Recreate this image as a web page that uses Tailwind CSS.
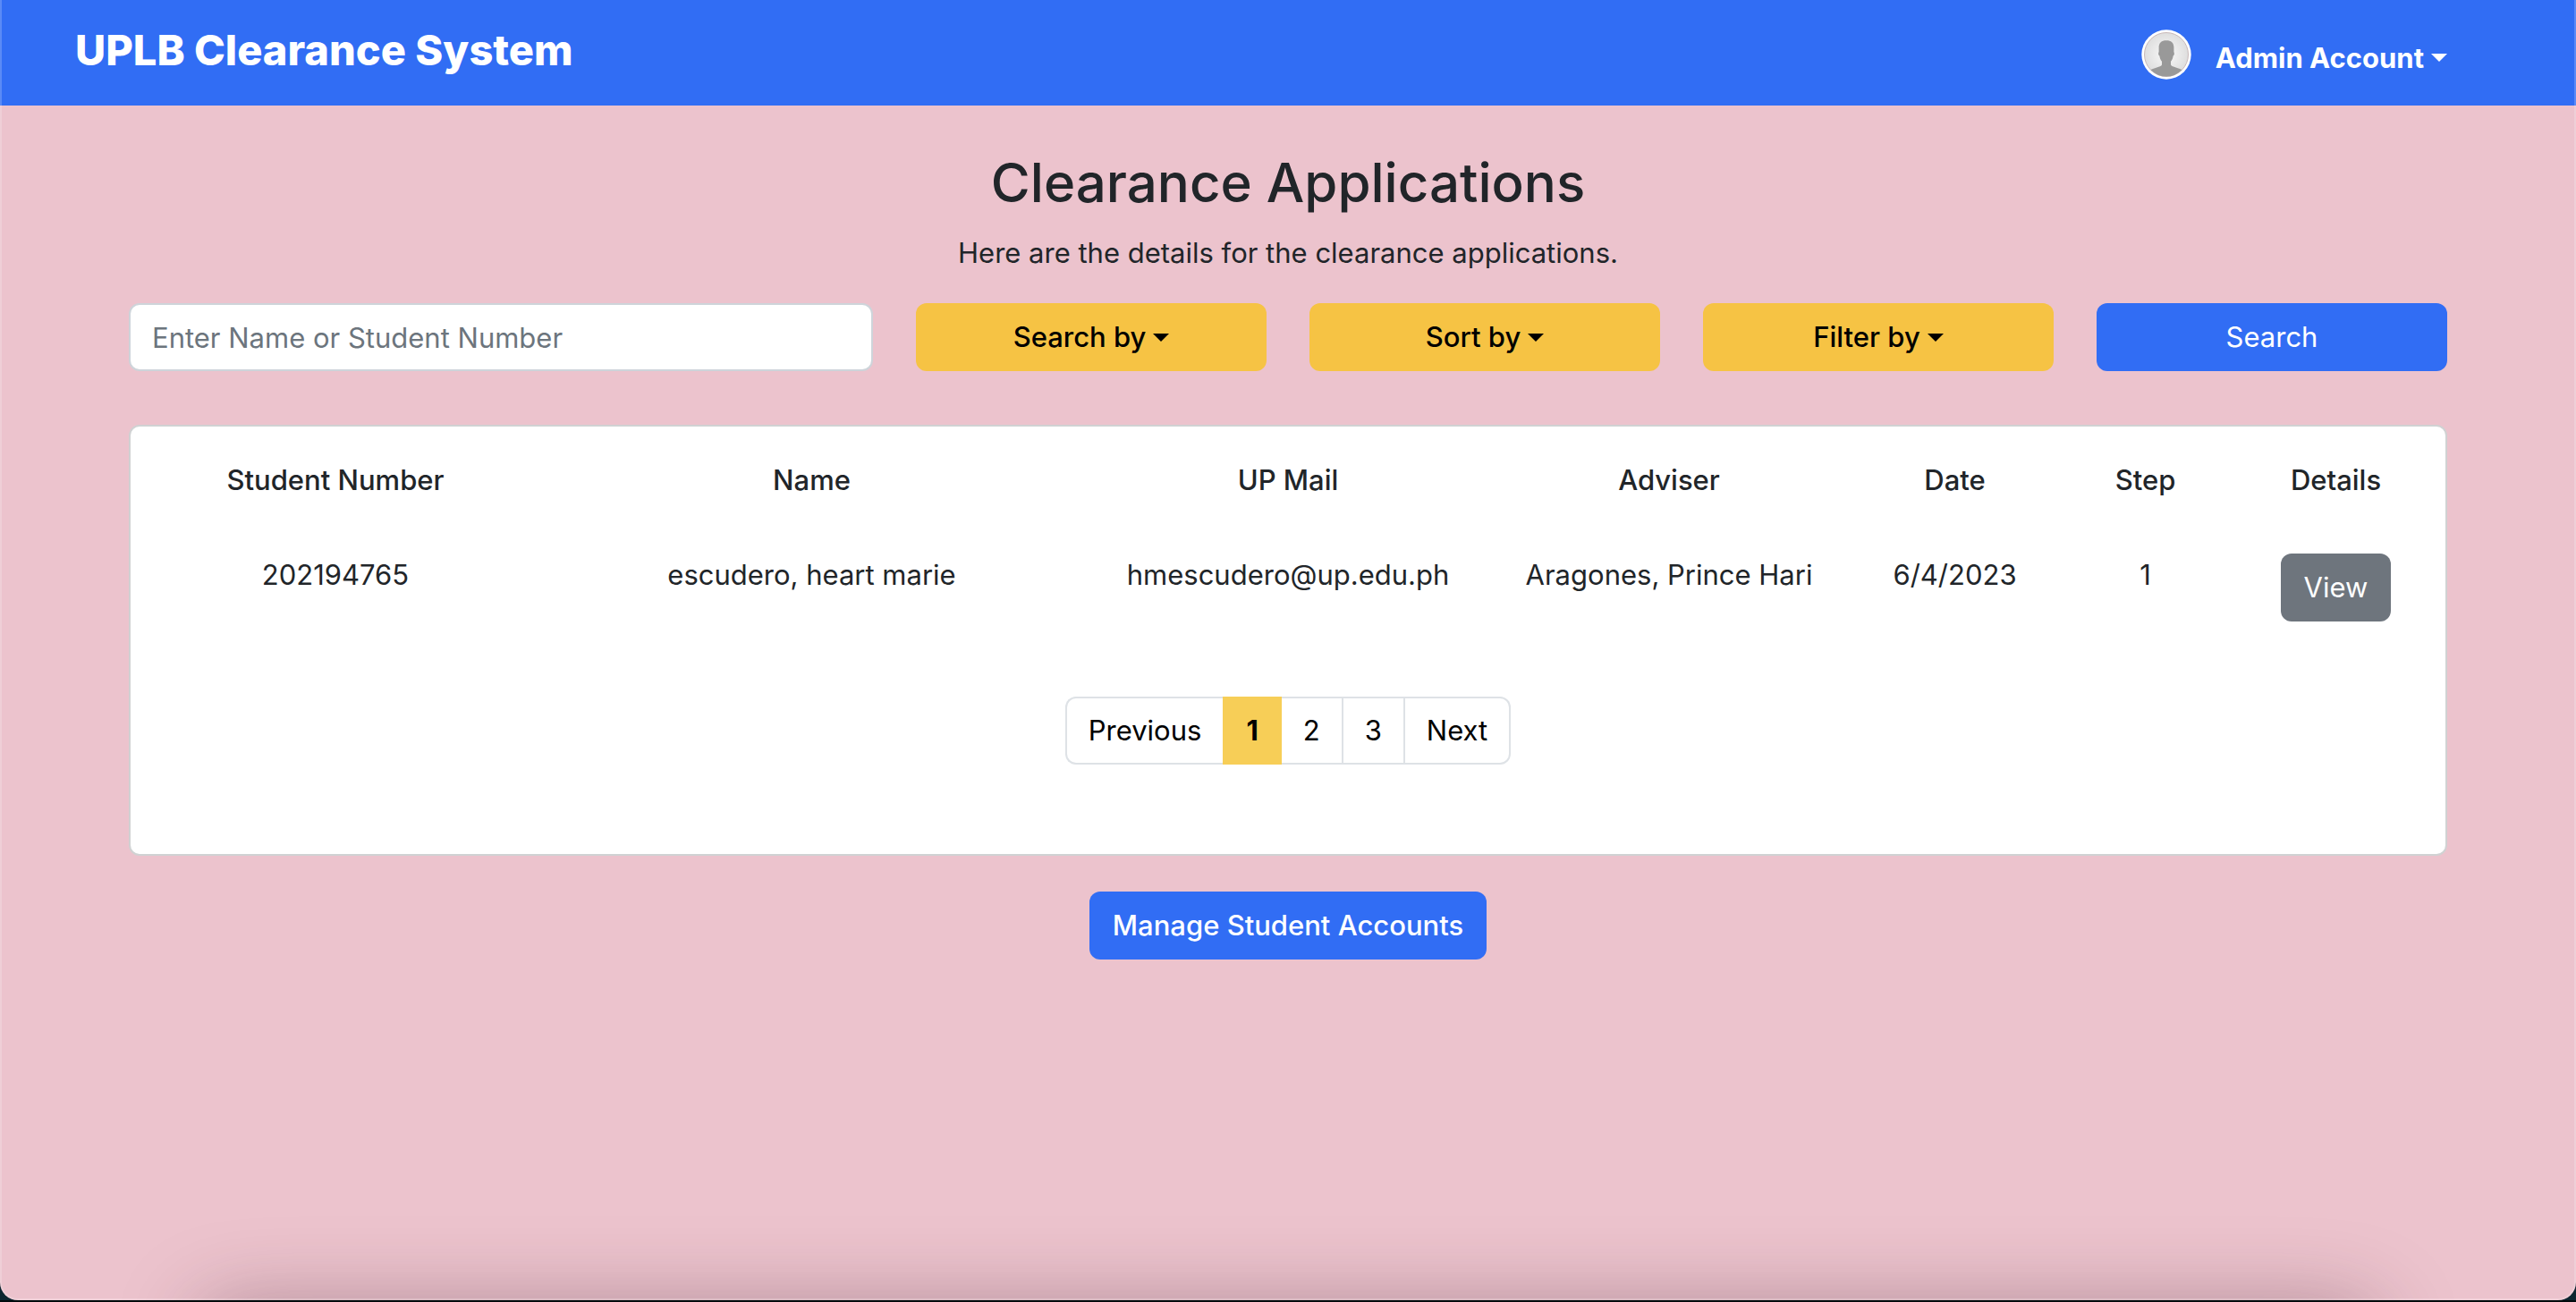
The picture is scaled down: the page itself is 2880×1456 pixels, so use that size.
<!DOCTYPE html>
<html lang="en" class="bg-black">
<head>
<meta charset="utf-8">
<title>UPLB Clearance System</title>
<script src="https://cdn.jsdelivr.net/npm/@tailwindcss/browser@4"></script>
</head>
<body class="bg-[#0d2630] border-b-2 border-[#020a0c] font-['Inter','Liberation_Sans',sans-serif] text-[31px] leading-12 text-[#212529]">
<div class="relative min-h-[calc(100vh-2px)] overflow-hidden rounded-b-[20px] bg-[#ecc3cd]">

  <header class="flex items-end justify-between bg-[#316df4] pt-[23px] pr-36 pb-[29px] pl-[84px] text-white">
    <a href="#" class="text-[47px] leading-[66px] font-extrabold">UPLB Clearance System</a>
    <button type="button" aria-haspopup="menu" class="flex items-end font-bold">
      <svg class="mr-[27px] size-14" viewBox="0 0 56 56" aria-hidden="true">
        <defs>
          <radialGradient id="halo"><stop offset="0" stop-color="#fafafa"/><stop offset="1" stop-color="#dedede"/></radialGradient>
          <clipPath id="disc"><circle cx="28" cy="28" r="24.5"/></clipPath>
        </defs>
        <circle cx="28" cy="28" r="27.7" fill="#fff"/>
        <circle cx="28" cy="28" r="24.5" fill="url(#halo)" stroke="#c9b9b9" stroke-width="1"/>
        <path clip-path="url(#disc)" fill="#999" d="M28 12.200c-5.400 0-8.400 2.600-8.400 7.800v5.300c-.8.200-.6 3.600.7 4 .4 3 1.300 5 2.700 6.500v3.700c-1.300 2.600-9 3.200-14.500 6.500V56h39V46c-5.500-3.300-13.200-3.900-14.500-6.500v-3.700c1.400-1.500 2.300-3.500 2.700-6.500 1.300-.4 1.500-3.800.7-4V20c0-5.200-3-7.800-8.400-7.800z"/>
      </svg>
      <span>Admin Account</span>
      <svg class="mb-5 ml-2 h-[9px] w-[18px] fill-current" viewBox="0 0 18 9" aria-hidden="true"><path d="M0 0h18L9 9z"/></svg>
    </button>
  </header>

  <main class="px-36 pt-12 text-center">
    <h1 class="text-[60px] leading-[77px] font-medium">Clearance Applications</h1>
    <p class="mt-4">Here are the details for the clearance applications.</p>

    <form class="mt-8 grid grid-cols-6 gap-12" onsubmit="return false">
      <input type="search" aria-label="Name or student number" placeholder="Enter Name or Student Number" class="col-span-2 h-[76px] rounded-xl border-2 border-[#ced4da] bg-white px-6 placeholder:text-[#6c757d] placeholder:opacity-100">
      <button type="button" aria-haspopup="menu" class="flex h-[76px] items-center justify-center gap-2 rounded-xl bg-[#f6c344] font-medium text-black">Search by
        <svg class="h-[9px] w-[18px] fill-current" viewBox="0 0 18 9" aria-hidden="true"><path d="M0 0h18L9 9z"/></svg>
      </button>
      <button type="button" aria-haspopup="menu" class="flex h-[76px] items-center justify-center gap-2 rounded-xl bg-[#f6c344] font-medium text-black">Sort by
        <svg class="h-[9px] w-[18px] fill-current" viewBox="0 0 18 9" aria-hidden="true"><path d="M0 0h18L9 9z"/></svg>
      </button>
      <button type="button" aria-haspopup="menu" class="flex h-[76px] items-center justify-center gap-2 rounded-xl bg-[#f6c344] font-medium text-black">Filter by
        <svg class="h-[9px] w-[18px] fill-current" viewBox="0 0 18 9" aria-hidden="true"><path d="M0 0h18L9 9z"/></svg>
      </button>
      <button type="submit" class="h-[76px] rounded-xl bg-[#316df4] text-white">Search</button>
    </form>

    <section class="mt-[60px] rounded-xl border-2 border-[#d0d2d3] bg-white px-4 pt-9 pb-[100px]">
      <table class="w-full table-fixed">
        <colgroup>
          <col class="w-2/12"><col class="w-3/12"><col class="w-2/12"><col class="w-2/12"><col class="w-1/12"><col class="w-1/12"><col class="w-1/12">
        </colgroup>
        <thead>
          <tr class="[&>th]:p-0 [&>th]:pb-[58px] [&>th]:font-medium">
            <th scope="col">Student Number</th>
            <th scope="col">Name</th>
            <th scope="col">UP Mail</th>
            <th scope="col">Adviser</th>
            <th scope="col">Date</th>
            <th scope="col">Step</th>
            <th scope="col">Details</th>
          </tr>
        </thead>
        <tbody>
          <tr class="align-top [&>td]:p-0">
            <td>202194765</td>
            <td>escudero, heart marie</td>
            <td>hmescudero@up.edu.ph</td>
            <td>Aragones, Prince Hari</td>
            <td>6/4/2023</td>
            <td>1</td>
            <td><button type="button" class="mx-auto block h-[76px] rounded-xl bg-[#6e757d] px-[26px] text-white">View</button></td>
          </tr>
        </tbody>
      </table>

      <nav aria-label="Pagination" class="mt-[84px]">
        <ul class="flex justify-center text-black">
          <li><a href="#" class="block rounded-l-xl border-2 border-r-0 border-[#dee2e6] px-6 py-3">Previous</a></li>
          <li><a href="#" aria-current="page" class="block bg-[#f7ce57] px-[26px] py-[14px] font-bold">1</a></li>
          <li><a href="#" class="block border-y-2 border-r-2 border-[#dee2e6] px-6 py-3">2</a></li>
          <li><a href="#" class="block border-y-2 border-r-2 border-[#dee2e6] px-6 py-3">3</a></li>
          <li><a href="#" class="block rounded-r-xl border-2 border-l-0 border-[#dee2e6] px-6 py-3">Next</a></li>
        </ul>
      </nav>
    </section>

    <button type="button" class="mt-10 h-[76px] rounded-xl bg-[#316df4] px-[26px] font-medium text-white">Manage Student Accounts</button>
  </main>

  <!-- Soft shade rising from the lower edge, and the thin highlight round the window -->
  <div class="pointer-events-none absolute inset-x-[230px] -bottom-20 h-16 rounded-[30px] shadow-[0_0_90px_10px_rgba(60,30,45,0.36)]"></div>
  <div class="pointer-events-none absolute inset-0 rounded-b-[20px] border-x-2 border-b-2 border-white/20"></div>
</div>
</body>
</html>
